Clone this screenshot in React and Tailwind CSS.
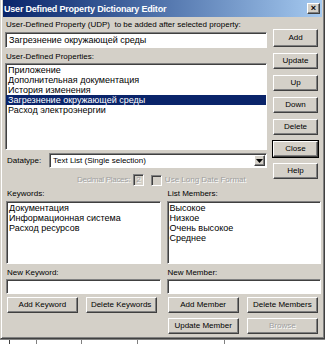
import React from "react";

const sunken =
  "border border-t-[#808080] border-l-[#808080] border-r-white border-b-white shadow-[inset_1px_1px_0_#404040]";
const raised =
  "border border-t-white border-l-white border-r-[#404040] border-b-[#404040] shadow-[inset_-1px_-1px_0_#808080]";

function Btn({ children, className = "", disabled = false, isDefault = false }) {
  return (
    <div
      className={`flex items-center justify-center whitespace-nowrap bg-[#d4d0c8] ${raised} ${
        isDefault ? "outline outline-1 outline-black" : ""
      } ${disabled ? "text-[#a0a0a0] [text-shadow:1px_1px_0_#fff]" : "text-black"} ${className}`}
    >
      {children}
    </div>
  );
}

function ListBox({ items, selected = -1, className = "" }) {
  return (
    <div className={`bg-white ${sunken} pt-[1px] text-[9px] ${className}`}>
      {items.map((item, i) => (
        <div
          key={item}
          className={`h-[10px] pl-[2px] leading-[10px] whitespace-nowrap ${
            i === selected ? "bg-[#0a246a] text-white" : "text-black"
          }`}
        >
          {item}
        </div>
      ))}
    </div>
  );
}

export default function App() {
  const properties = [
    "Приложение",
    "Дополнительная документация",
    "История изменения",
    "Загрезнение окружающей среды",
    "Расход электроэнергии",
  ];
  const keywords = ["Документация", "Информационная система", "Расход ресурсов"];
  const members = ["Высокое", "Низкое", "Очень высокое", "Среднее"];

  return (
    <div className="w-[325px] h-[344px] overflow-hidden bg-white font-['Liberation_Sans',Arial,sans-serif] text-[8px] leading-[10px] text-black whitespace-nowrap">
      <div className="h-[339px] bg-[#d4d0c8] border-x border-b border-l-[#d4d0c8] border-r-[#404040] border-b-[#404040] shadow-[inset_1px_0_0_#fff,inset_-1px_-1px_0_#808080] px-[2px] pb-[2px] flex flex-col">
        {/* title bar */}
        <div className="h-[17px] flex items-center justify-between pl-[1px] pr-[2px] bg-gradient-to-r from-[#0a246a] to-[#a6caf0]">
          <span className="text-white font-bold text-[9px] tracking-[-0.2px]">User Defined Property Dictionary Editor</span>
          <Btn className="w-[13px] h-[11px] text-[9px] font-bold leading-none">×</Btn>
        </div>

        {/* top section */}
        <div className="flex pl-[2px] pr-[1px]">
          <div className="w-[262px] flex flex-col">
            <div className="mt-[3px] h-[10px] pl-[1px]">User-Defined Property (UDP)&nbsp; to be added after selected property:</div>
            <div className={`mt-[2px] h-[16px] bg-white ${sunken} pl-[3px] flex items-center text-[9px]`}>
              Загрезнение окружающей среды
            </div>
            <div className="mt-[4px] h-[10px] pl-[1px]">User-Defined Properties:</div>
            <ListBox items={properties} selected={3} className="mt-[1px] h-[87px]" />
            <div className="mt-[3px] flex items-center">
              <span className="w-[44px] pl-[2px]">Datatype:</span>
              <div className={`flex-1 h-[15px] bg-white ${sunken} flex items-center justify-between pl-[3px] pr-[1px]`}>
                <span>Text List (Single selection)</span>
                <Btn className="w-[11px] h-[11px]">
                  <svg width="7" height="4" viewBox="0 0 7 4">
                    <path d="M0 0h7L3.5 4z" fill="#000" />
                  </svg>
                </Btn>
              </div>
            </div>
            <div className="mt-[6px] flex items-center text-[#a0a0a0] [text-shadow:1px_1px_0_#fff]">
              <span className="ml-[72px] tracking-[-0.3px]">Decimal Places:</span>
              <div className={`ml-[3px] w-[11px] h-[12px] bg-[#d4d0c8] ${sunken} flex items-center justify-center`}>2</div>
              <div className={`ml-[7px] w-[11px] h-[11px] bg-[#d4d0c8] ${sunken}`} />
              <span className="ml-[3px]">Use Long Date Format</span>
            </div>
          </div>
          <div className="ml-[6px] w-[45px] flex flex-col gap-[6px] pt-[12px]">
            <Btn className="h-[18px]">Add</Btn>
            <Btn className="h-[16px]">Update</Btn>
            <Btn className="h-[16px]">Up</Btn>
            <Btn className="h-[16px]">Down</Btn>
            <Btn className="h-[16px]">Delete</Btn>
            <Btn className="h-[16px]" isDefault>Close</Btn>
            <Btn className="h-[16px]">Help</Btn>
          </div>
        </div>

        {/* bottom section */}
        <div className="mt-[3px] pl-[3px] pr-[1px] grid grid-cols-2 gap-x-[6px]">
          <div className="flex flex-col">
            <div className="h-[10px] pl-[1px]">Keywords:</div>
            <ListBox items={keywords} className="mt-[2px] h-[63px]" />
            <div className="mt-[4px] h-[10px] pl-[1px]">New Keyword:</div>
            <div className={`mt-[1px] h-[15px] bg-white ${sunken}`} />
            <div className="mt-[3px] grid grid-cols-2 gap-x-[8px] pl-[1px] pr-[4px]">
              <Btn className="h-[16px]">Add Keyword</Btn>
              <Btn className="h-[16px]">Delete Keywords</Btn>
            </div>
          </div>
          <div className="flex flex-col">
            <div className="h-[10px] pl-[1px]">List Members:</div>
            <ListBox items={members} className="mt-[2px] h-[63px]" />
            <div className="mt-[4px] h-[10px] pl-[1px]">New Member:</div>
            <div className={`mt-[1px] h-[15px] bg-white ${sunken}`} />
            <div className="mt-[3px] grid grid-cols-2 gap-x-[8px] gap-y-[5px] pl-[1px] pr-[3px]">
              <Btn className="h-[16px]">Add Member</Btn>
              <Btn className="h-[16px]">Delete Members</Btn>
              <Btn className="h-[16px]">Update Member</Btn>
              <Btn className="h-[16px]" disabled>Browse</Btn>
            </div>
          </div>
        </div>
      </div>
      {/* window beneath */}
      <div className="h-[5px] flex border-t border-[#808080]">
        <div className="w-[10px] border-r border-[#404040]" />
        <div className="w-[27px] border-r border-[#808080]" />
        <div className="w-[45px] border-r border-[#808080]" />
        <div className="w-[56px] border-r border-[#808080]" />
        <div className="w-[87px] border-r border-[#808080]" />
      </div>
    </div>
  );
}
